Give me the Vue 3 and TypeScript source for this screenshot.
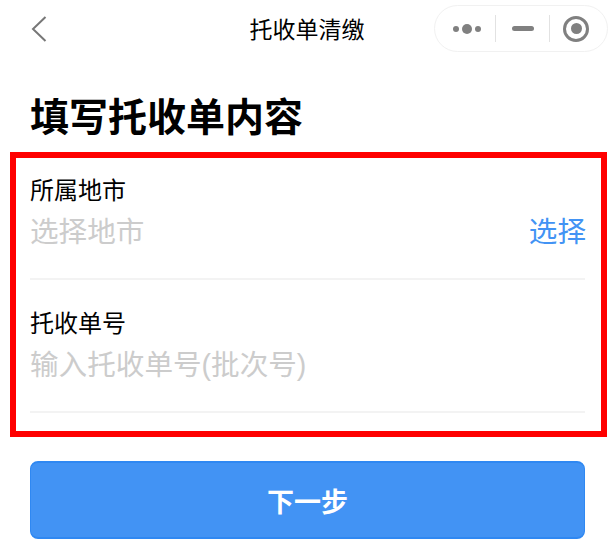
<script setup lang="ts">
const fields = [
  { label: '所属地市', placeholder: '选择地市', action: '选择' },
  { label: '托收单号', placeholder: '输入托收单号(批次号)', action: '' },
]
</script>

<template>
  <div class="page">
    <header class="nav">
      <svg class="back" width="18" height="28" viewBox="0 0 18 28">
        <path d="M15.5 2 L3 14 L15.5 26" fill="none" stroke="#777" stroke-width="2" />
      </svg>
      <div class="nav-title">托收单清缴</div>
      <div class="capsule">
        <span class="cap-cell dots">
          <i class="dot small"></i><i class="dot big"></i><i class="dot small"></i>
        </span>
        <span class="sep"></span>
        <span class="cap-cell"><i class="minus"></i></span>
        <span class="sep"></span>
        <span class="cap-cell"><i class="ring"><i class="core"></i></i></span>
      </div>
    </header>

    <h1 class="heading">填写托收单内容</h1>

    <section class="form">
      <div v-for="f in fields" :key="f.label" class="field">
        <div class="label">{{ f.label }}</div>
        <div class="row">
          <span class="placeholder">{{ f.placeholder }}</span>
          <span v-if="f.action" class="action">{{ f.action }}</span>
        </div>
      </div>
    </section>

    <button class="next" type="button">下一步</button>
  </div>
</template>

<style>
html, body { margin: 0; background: #fff; }
</style>

<style scoped>
.page {
  width: 616px;
  height: 553px;
  overflow: hidden;
  background: #fff;
  font-family: "Liberation Sans", "Noto Sans CJK SC", sans-serif;
  color: #000;
  box-sizing: border-box;
}
.nav {
  position: relative;
  height: 60px;
  padding: 0 8px 0 30px;
  box-sizing: border-box;
  display: flex;
  align-items: flex-start;
  justify-content: space-between;
}
.back { display: block; margin-top: 15px; }
.nav-title {
  position: absolute;
  left: 0;
  right: 0;
  top: 13px;
  text-align: center;
  font-size: 23px;
  line-height: 34px;
  padding-right: 2px;
  pointer-events: none;
}
.capsule {
  width: 174px;
  height: 47px;
  margin-top: 5px;
  border: 1px solid #f1f1f1;
  border-radius: 24px;
  box-sizing: border-box;
  display: grid;
  grid-template-columns: 60px 1px 53px 1px 52px;
  align-items: center;
}
.cap-cell {
  display: flex;
  align-items: center;
  justify-content: center;
  gap: 3px;
}
.dots { padding-left: 4px; }
.dot { display: block; border-radius: 50%; background: #808080; }
.dot.small { width: 6px; height: 6px; }
.dot.big { width: 10px; height: 10px; }
.sep { width: 1px; height: 27px; background: #e2e2e2; }
.minus { display: block; width: 22px; height: 5px; border-radius: 3px; background: #808080; }
.ring {
  width: 26px;
  height: 26px;
  border: 3px solid #808080;
  border-radius: 50%;
  box-sizing: border-box;
  display: flex;
  align-items: center;
  justify-content: center;
}
.core { display: block; width: 11px; height: 11px; border-radius: 50%; background: #808080; }
.heading {
  margin: 33px 0 0 30px;
  font-size: 39px;
  line-height: 50px;
  font-weight: 700;
  height: 59px;
}
.form {
  width: 597px;
  height: 285px;
  margin-left: 10px;
  border: 6px solid #f00;
  box-sizing: border-box;
  padding: 0 16px 0 14px;
}
.field {
  height: 122px;
  margin-bottom: 11px;
  padding-top: 18px;
  box-sizing: border-box;
  border-bottom: 2px solid #f3f3f3;
}
.label { font-size: 24px; line-height: 30px; }
.row {
  display: flex;
  justify-content: space-between;
  align-items: center;
  height: 40px;
  margin-top: 3px;
  font-size: 28.6px;
}
.placeholder { color: #cccccc; }
.action { color: #4293f4; margin-right: -1px; }
.next {
  display: block;
  width: 555px;
  height: 78px;
  margin: 24px 0 0 30px;
  background: #4293f4;
  border: 2px solid #2f88f2;
  border-width: 2px 1px;
  border-radius: 8px;
  color: #fff;
  font-family: inherit;
  font-size: 27px;
  font-weight: 700;
  padding: 0;
}
</style>
